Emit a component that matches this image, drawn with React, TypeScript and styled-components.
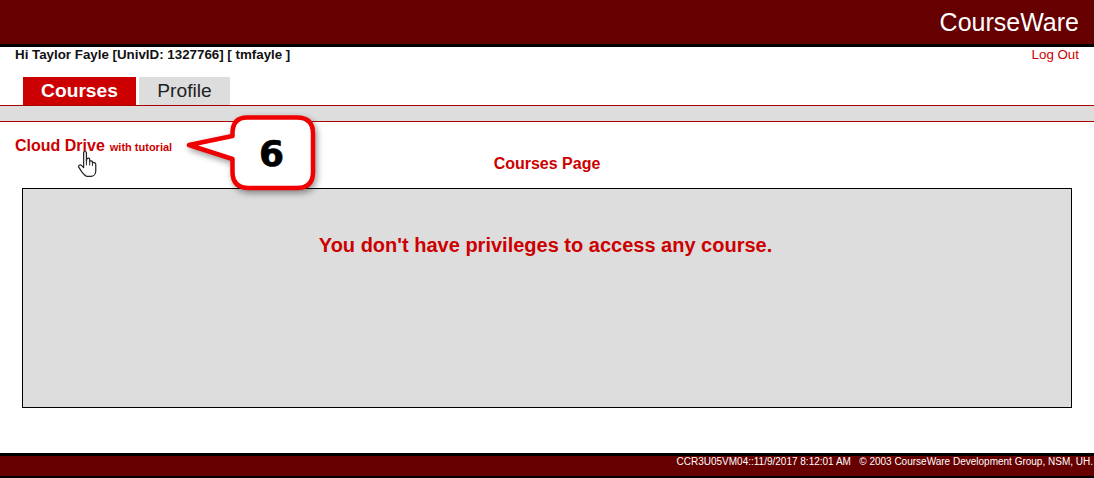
import React from 'react';
import styled, { createGlobalStyle } from 'styled-components';

const GlobalStyle = createGlobalStyle`
  html, body {
    margin: 0;
    padding: 0;
    background: #fff;
    font-family: "Liberation Sans", Arial, sans-serif;
  }
`;

const Page = styled.div`
  position: relative;
  width: 1094px;
  height: 478px;
  overflow: hidden;
  display: flex;
  flex-direction: column;
`;

const Header = styled.header`
  height: 44px;
  background: #660000;
  border-bottom: 3px solid #000;
  display: flex;
  align-items: center;
  justify-content: flex-end;
  padding-right: 15px;
`;

const Brand = styled.div`
  color: #fff;
  font-size: 25px;
  line-height: 38px;
`;

const UserRow = styled.div`
  height: 30px;
  display: flex;
  justify-content: space-between;
  padding: 0 15px;
  font-size: 13.33px;
  line-height: 16px;
`;

const UserName = styled.span`
  font-weight: bold;
  color: #111;
`;

const LogOut = styled.a`
  color: #cc0000;
`;

const Tabs = styled.nav`
  height: 28px;
  display: flex;
  gap: 3px;
  padding-left: 23px;
`;

const Tab = styled.div<{ $active?: boolean }>`
  width: ${(p) => (p.$active ? '113px' : '91px')};
  background: ${(p) => (p.$active ? '#cc0000' : '#dddddd')};
  color: ${(p) => (p.$active ? '#fff' : '#222')};
  font-weight: ${(p) => (p.$active ? 'bold' : 'normal')};
  font-size: 19.2px;
  line-height: 28px;
  text-align: center;
`;

const SubBar = styled.div`
  height: 15px;
  background: #dddddd;
  border-top: 1px solid #aa0000;
  border-bottom: 1px solid #aa0000;
`;

const Content = styled.main`
  flex: 1;
  display: flex;
  flex-direction: column;
`;

const DriveRow = styled.div`
  height: 14px;
  padding: 15px 15px 0;
  color: #cc0000;
  font-weight: bold;
  line-height: 18px;
`;

const DriveLink = styled.a`
  font-size: 16px;
`;

const DriveNote = styled.span`
  font-size: 11px;
  margin-left: 5px;
`;

const PageTitle = styled.h2`
  margin: 0;
  height: 37px;
  font-size: 16px;
  line-height: 26px;
  color: #cc0000;
  text-align: center;
`;

const MessageBox = styled.section`
  width: 1045px;
  height: 174px;
  margin-left: 22px;
  background: #dddddd;
  border: 1px solid #000;
  padding: 44px 3px 0 0;
  color: #cc0000;
  font-size: 20px;
  font-weight: bold;
  line-height: 24px;
  text-align: center;
`;

const Footer = styled.footer`
  height: 20px;
  background: #660000;
  border-top: 3px solid #000;
  border-bottom: 2px solid #000;
  display: flex;
  justify-content: flex-end;
  padding-right: 1px;
  color: #fff;
  font-size: 10px;
  line-height: 11px;
  white-space: pre;
`;

const Callout = styled.svg`
  position: absolute;
  left: 180px;
  top: 110px;
  filter: drop-shadow(2px 3px 3px rgba(0, 0, 0, 0.4));
`;

const CalloutNumber = styled.span`
  position: absolute;
  left: 259px;
  top: 131px;
  font-family: "DejaVu Sans", sans-serif;
  font-weight: bold;
  font-size: 36px;
  line-height: 46px;
  color: #000;
  -webkit-text-stroke: 0.7px #000;
`;

const Pointer = styled.svg`
  position: absolute;
  left: 77px;
  top: 150px;
`;

const App: React.FC = () => {
  return (
    <Page>
      <GlobalStyle />
      <Header>
        <Brand>CourseWare</Brand>
      </Header>
      <UserRow>
        <UserName>Hi Taylor Fayle [UnivID: 1327766] [ tmfayle ]</UserName>
        <LogOut>Log Out</LogOut>
      </UserRow>
      <Tabs>
        <Tab $active>Courses</Tab>
        <Tab>Profile</Tab>
      </Tabs>
      <SubBar />
      <Content>
        <DriveRow>
          <DriveLink>Cloud Drive</DriveLink>
          <DriveNote>with tutorial</DriveNote>
        </DriveRow>
        <PageTitle>Courses Page</PageTitle>
        <MessageBox>You don't have privileges to access any course.</MessageBox>
      </Content>
      <Footer>
        {'CCR3U05VM04::11/9/2017 8:12:01 AM   © 2003 CourseWare Development Group, NSM, UH.'}
      </Footer>
      <Callout width="145" height="90" viewBox="0 0 145 90">
        <path
          d="M67 7.5 H117 Q133 7.5 133 23.5 V62 Q133 78 117 78 H69 Q52.5 78 52.5 62 V49 L9 35 L52.5 26 V23.5 Q52.5 7.5 67 7.5 Z"
          fill="#fff"
          stroke="#f00000"
          strokeWidth="4.5"
          strokeLinejoin="round"
        />
      </Callout>
      <CalloutNumber>6</CalloutNumber>
      <Pointer width="21" height="27" viewBox="0 0 18 24.5">
        <path
          d="M5.5 2.5 C5.5 1 8 1 8 2.5 V10 L8.5 8 C9 7 11 7 11 8.5 V10.5 C11.5 9.5 13.5 9.5 13.5 11 V12 C14 11 16.5 11 16.5 13 V19 C16.5 22 14.5 24 12 24 H9.5 C7 24 5.5 22 4 20 L1 15.5 C0.5 14 2.5 13 3.5 14 L5.5 16 Z"
          fill="#fff"
          stroke="#222"
          strokeWidth="1.1"
          strokeLinejoin="round"
        />
        <path d="M8 10 V14 M11 10.5 V14 M13.5 12 V14.5" stroke="#222" strokeWidth="0.9" fill="none" />
      </Pointer>
    </Page>
  );
};

export default App;
